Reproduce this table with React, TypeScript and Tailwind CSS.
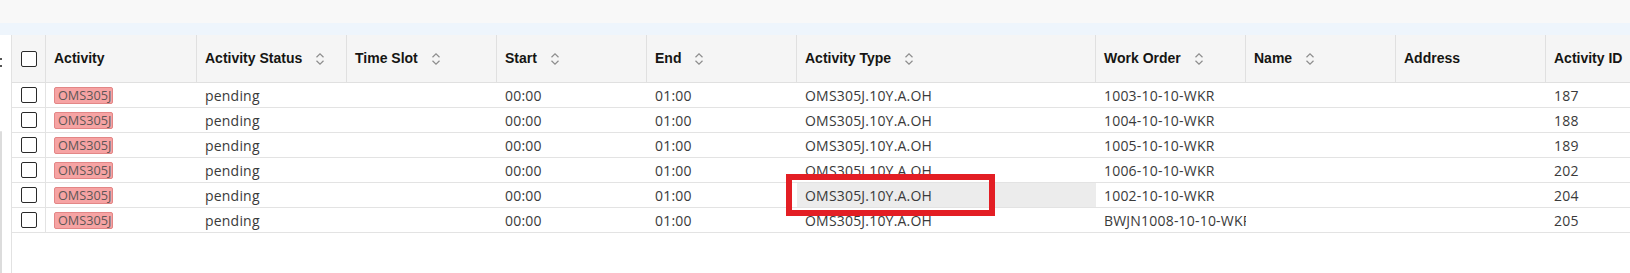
import React from 'react';

type Col = { key: string; label: string; width: number; sort?: boolean };

const columns: Col[] = [
  { key: 'activity', label: 'Activity', width: 151 },
  { key: 'status', label: 'Activity Status', width: 150, sort: true },
  { key: 'slot', label: 'Time Slot', width: 150, sort: true },
  { key: 'start', label: 'Start', width: 150, sort: true },
  { key: 'end', label: 'End', width: 150, sort: true },
  { key: 'type', label: 'Activity Type', width: 299, sort: true },
  { key: 'order', label: 'Work Order', width: 150, sort: true },
  { key: 'name', label: 'Name', width: 150, sort: true },
  { key: 'address', label: 'Address', width: 150 },
  { key: 'id', label: 'Activity ID', width: 200 },
];

const rows = [
  { order: '1003-10-10-WKR', id: '187' },
  { order: '1004-10-10-WKR', id: '188' },
  { order: '1005-10-10-WKR', id: '189' },
  { order: '1006-10-10-WKR', id: '202' },
  { order: '1002-10-10-WKR', id: '204', selected: true },
  { order: 'BWJN1008-10-10-WKR', id: '205' },
];

function SortIcon() {
  return (
    <svg width="10" height="14" viewBox="0 0 10 14" className="ml-[13px] shrink-0" fill="none">
      <path d="M1.5 5.2 5 1.8 8.5 5.2" stroke="#8d8d8d" strokeWidth="1.2" />
      <path d="M1.5 8.8 5 12.2 8.5 8.8" stroke="#8d8d8d" strokeWidth="1.2" />
    </svg>
  );
}

function Checkbox() {
  return <div className="w-4 h-4 rounded-[2px] border-[1.5px] border-[#2a2a2a] bg-white" />;
}

export default function App() {
  return (
    <div className="relative w-[1630px] h-[273px] bg-white overflow-hidden font-['Open_Sans',sans-serif] text-[14px] tracking-[0.2px] text-[#3a3a3a]">
      {/* top bars */}
      <div className="h-[23px] bg-[#f8f8f8]" />
      <div className="h-[12px] bg-[#eef5fc]" />

      <div className="flex h-[238px]">
        {/* collapsed side panel */}
        <div className="relative w-[12px] shrink-0 border-r border-[#e2e2e2]">
          <div className="absolute left-0 top-[23px] w-[2px] h-[2px] bg-[#555]" />
          <div className="absolute left-0 top-[30px] w-[2px] h-[2px] bg-[#555]" />
          <div className="absolute left-0 top-[96px] bottom-0 w-[2px] rounded-t bg-[#dcdcdc]" />
        </div>

        {/* table */}
        <div className="flex-1 overflow-hidden">
          <div className="flex h-[48px] bg-[#f5f5f5] border-b border-[#e0e0e0]">
            <div className="w-[34px] shrink-0 flex items-center justify-center border-r border-[#e0e0e0]">
              <Checkbox />
            </div>
            {columns.map((c) => (
              <div
                key={c.key}
                style={{ width: c.width }}
                className="shrink-0 flex items-center pl-2 border-r border-[#e0e0e0] font-['Liberation_Sans',sans-serif] font-bold tracking-normal text-[#161513] whitespace-nowrap"
              >
                {c.label}
                {c.sort && <SortIcon />}
              </div>
            ))}
          </div>

          {rows.map((r, i) => (
            <div key={i} className="flex h-[25px] border-b border-[#e3e3e3]">
              <div className="w-[34px] shrink-0 flex items-center justify-center border-r border-[#e3e3e3]">
                <Checkbox />
              </div>
              <div className="w-[151px] shrink-0 flex items-center pl-2">
                <span className="w-[59px] h-[17px] overflow-hidden whitespace-nowrap rounded-[2px] border border-[#e38686] bg-[#f6a3a3] pl-[3px] text-[12.7px] tracking-normal leading-[15px] text-[#5e5656]">
                  OMS305J.10Y.A.OH
                </span>
              </div>
              <div className="w-[150px] shrink-0 flex items-center pl-2">pending</div>
              <div className="w-[150px] shrink-0" />
              <div className="w-[150px] shrink-0 flex items-center pl-2">00:00</div>
              <div className="w-[150px] shrink-0 flex items-center pl-2">01:00</div>
              <div className={`w-[299px] shrink-0 flex items-center pl-2 ${r.selected ? 'bg-[#ececec]' : ''}`}>
                OMS305J.10Y.A.OH
              </div>
              <div className="w-[150px] shrink-0 flex items-center pl-2 pr-[2px] overflow-hidden whitespace-nowrap">
                {r.order}
              </div>
              <div className="w-[150px] shrink-0" />
              <div className="w-[150px] shrink-0" />
              <div className="w-[200px] shrink-0 flex items-center pl-2">{r.id}</div>
            </div>
          ))}
        </div>
      </div>

      {/* annotation highlight */}
      <div className="absolute left-[786px] top-[174px] w-[209px] h-[42px] border-[6px] border-[#e31e24]" />
    </div>
  );
}
